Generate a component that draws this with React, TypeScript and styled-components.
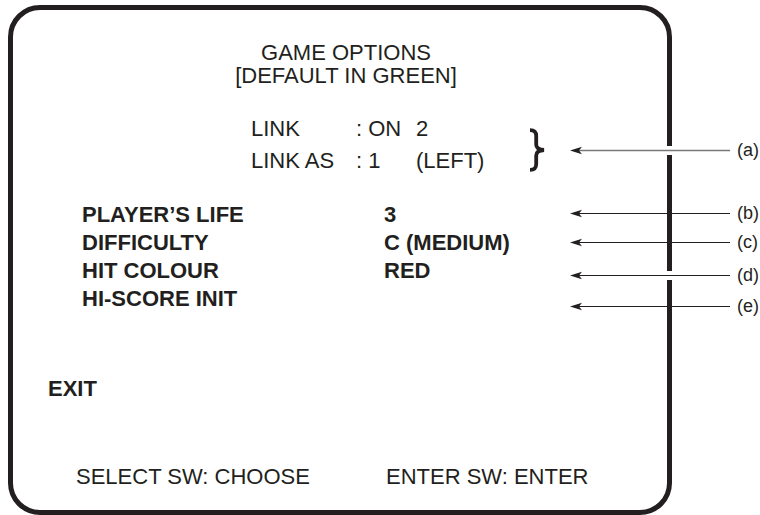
import React from "react";
import styled, { createGlobalStyle } from "styled-components";

const GlobalStyle = createGlobalStyle`
  body {
    margin: 0;
    background: #ffffff;
  }
`;

const Screen = styled.div`
  position: relative;
  width: 760px;
  height: 515px;
  box-sizing: border-box;
  padding: 5px 0 0 8px;
  overflow: hidden;
  background: #ffffff;
  color: #231f20;
  font-family: "Liberation Sans", Arial, sans-serif;
  font-size: 22px;
`;

const Frame = styled.div`
  width: 664px;
  height: 510px;
  box-sizing: border-box;
  border: 5px solid #231f20;
  border-radius: 32px;
  display: flex;
  flex-direction: column;
  padding-top: 31px;
`;

const Title = styled.div`
  text-align: center;
  line-height: 23px;
  padding-left: 12px;
`;

const LinkBlock = styled.div`
  display: flex;
  align-items: center;
  margin: 26px 0 0 238px;
`;

const LinkGrid = styled.div`
  display: grid;
  grid-template-columns: 105px 60px 112px;
  line-height: 32px;
  white-space: pre;
`;

const Brace = styled.svg`
  margin-top: 10px;
  flex: none;
`;

const Options = styled.div`
  display: grid;
  grid-template-columns: 302px auto;
  margin: 24px 0 0 69px;
  font-weight: 700;
  line-height: 28px;
`;

const Exit = styled.div`
  margin: 62px 0 0 35px;
  font-weight: 700;
  line-height: 28px;
`;

const Footer = styled.div`
  display: grid;
  grid-template-columns: 310px auto;
  margin: 60px 0 0 63px;
  line-height: 28px;
`;

const Callout = styled.div<{ $y: number }>`
  position: absolute;
  left: 570px;
  top: ${(p) => p.$y - 9}px;
  height: 18px;
  display: flex;
  align-items: center;
`;

const CalloutLabel = styled.span`
  margin-left: 7px;
  font-size: 18px;
  line-height: 18px;
`;

type Note = { label: string; y: number; grey?: boolean; gap?: boolean };

const notes: Note[] = [
  { label: "a", y: 150, grey: true, gap: true },
  { label: "b", y: 213 },
  { label: "c", y: 242 },
  { label: "d", y: 275, gap: true },
  { label: "e", y: 306 },
];

const Arrow: React.FC<{ grey?: boolean; gap?: boolean }> = ({ grey, gap }) => (
  <svg width="160" height="11" viewBox="0 0 160 11">
    {gap && <rect x="95" y="1" width="9" height="9" fill="#ffffff" />}
    <line
      x1="8"
      y1="5.5"
      x2="160"
      y2="5.5"
      stroke={grey ? "#77787b" : "#231f20"}
      strokeWidth={grey ? 1.4 : 1}
    />
    <path d="M0 5.5 L12 1.8 L9 5.5 L12 9.2 Z" fill="#231f20" />
  </svg>
);

const App: React.FC = () => {
  return (
    <>
      <GlobalStyle />
      <Screen>
        <Frame>
          <Title>
            <div>GAME OPTIONS</div>
            <div>[DEFAULT IN GREEN]</div>
          </Title>

          <LinkBlock>
            <LinkGrid>
              <span>LINK</span>
              <span>: ON</span>
              <span>2</span>
              <span>LINK AS</span>
              <span>: 1</span>
              <span>(LEFT)</span>
            </LinkGrid>
            <Brace width="18" height="44" viewBox="0 0 18 44">
              <path
                d="M2 2.2 C6.5 2.2 8.2 4 8.2 8 L8.2 16.5 C8.2 20 10.5 21.6 16 22 C10.5 22.4 8.2 24 8.2 27.5 L8.2 36 C8.2 40 6.5 41.8 2 41.8"
                fill="none"
                stroke="#231f20"
                strokeWidth="3.8"
                strokeLinejoin="miter"
              />
            </Brace>
          </LinkBlock>

          <Options>
            <span>PLAYER’S LIFE</span>
            <span>3</span>
            <span>DIFFICULTY</span>
            <span>C (MEDIUM)</span>
            <span>HIT COLOUR</span>
            <span>RED</span>
            <span>HI-SCORE INIT</span>
            <span />
          </Options>

          <Exit>EXIT</Exit>

          <Footer>
            <span>SELECT SW: CHOOSE</span>
            <span>ENTER SW: ENTER</span>
          </Footer>
        </Frame>

        {notes.map((n) => (
          <Callout key={n.label} $y={n.y}>
            <Arrow grey={n.grey} gap={n.gap} />
            <CalloutLabel>({n.label})</CalloutLabel>
          </Callout>
        ))}
      </Screen>
    </>
  );
};

export default App;
